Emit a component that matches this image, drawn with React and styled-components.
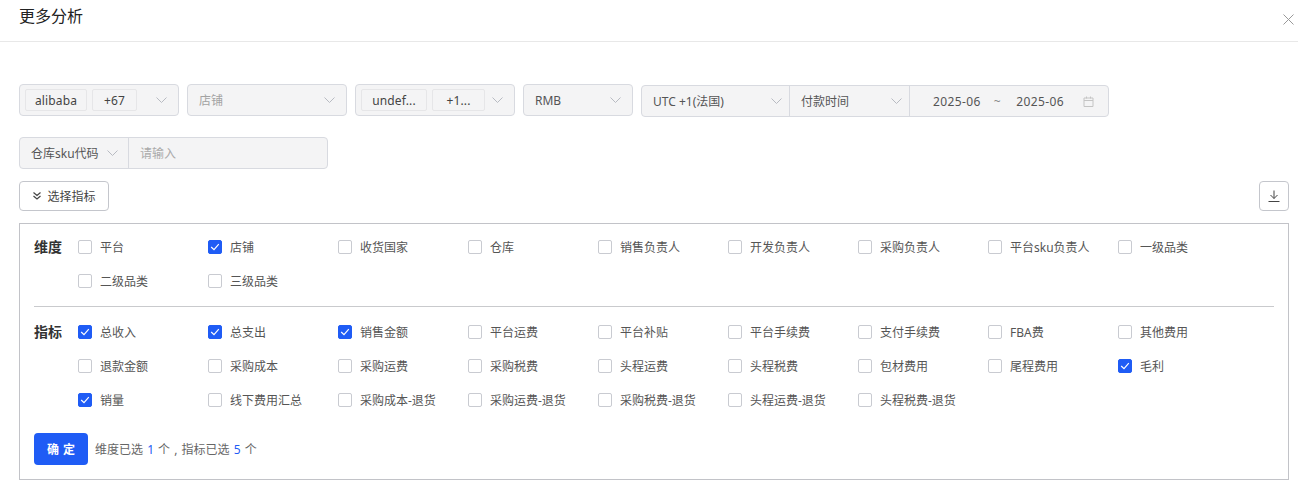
import React from "react";
import styled, { createGlobalStyle } from "styled-components";

const Global = createGlobalStyle`
  html, body { margin: 0; padding: 0; background: #fff; overflow: hidden; }
  body { font-family: "Noto Sans", "Noto Sans CJK SC", sans-serif; font-size: 12px; color: #333; }
  * { box-sizing: border-box; }
`;

const Header = styled.header`
  height: 42px; padding: 0 4px 9px 19px; border-bottom: 1px solid #e8e8e8;
  display: flex; justify-content: space-between; align-items: center;
`;
const Title = styled.h1`margin: 0; font-size: 16px; font-weight: 400; color: #222; line-height: 32px;`;
const CloseIcon = styled.svg`width: 11px; height: 11px; margin-top: 6px; stroke: #999; fill: none; stroke-width: 1;`;

const Body = styled.main`padding: 42px 9px 0 19px;`;
const FilterRow = styled.div`display: flex; gap: 8px; height: 33px; align-items: flex-start;`;
const Field = styled.div`
  width: ${p => p.$w}px; height: 32px; background: #f4f4f5; border: 1px solid #d8dae0; border-radius: 4px;
  display: flex; align-items: center; padding: 0 ${p => p.$pr ?? 11}px 0 ${p => p.$pl ?? 5}px; color: #555;
`;
const Tag = styled.span`
  width: ${p => p.$w}px; height: 22px; background: #f4f4f5; border: 1px solid #e6e6e8; border-radius: 2px;
  margin-right: 5px; display: flex; align-items: center; justify-content: center; color: #444;
  font-size: 12px; flex: none; letter-spacing: .15px;
`;
const Value = styled.span`flex: 1; padding-left: ${p => p.$pl ?? 6}px; color: ${p => (p.$muted ? "#a3a3a3" : "#555")};`;
const Chevron = styled.svg`width: 11px; height: 6px; margin-left: auto; stroke: #b8bbc2; fill: none; stroke-width: 1; flex: none;`;
const Down = () => <Chevron viewBox="0 0 11 6"><path d="M.5.5 5.500 5.500 10.500.5" /></Chevron>;

const Group = styled.div`
  margin-top: 1px; display: flex; height: 32px; width: 468px; background: #f4f4f5;
  border: 1px solid #d8dae0; border-radius: 4px; color: #555;
`;
const Segment = styled.div`
  width: ${p => p.$w}px; display: flex; align-items: center; padding: 0 ${p => p.$pr}px 0 11px;
  border-right: 1px solid #d8dae0; flex: none;
`;
const DateSeg = styled.div`
  flex: 1; display: flex; align-items: center; padding: 0 14px 0 23px; color: #555; letter-spacing: .4px;
`;
const Tilde = styled.span`margin: 0 15px 0 13px; color: #888;`;
const CalIcon = styled.svg`width: 11px; height: 11px; margin-left: auto; stroke: #c4c4c4; fill: none; stroke-width: 1;`;

const SearchRow = styled.div`
  margin-top: 20px; width: 309px; height: 32px; display: flex; background: #f4f4f5;
  border: 1px solid #d8dae0; border-radius: 4px;
`;
const SearchPick = styled.div`
  width: 109px; display: flex; align-items: center; padding: 0 10px 0 11px; border-right: 1px solid #d8dae0; color: #555;
`;
const SearchInput = styled.div`flex: 1; display: flex; align-items: center; padding-left: 11px; color: #aaa;`;

const ActionRow = styled.div`margin-top: 12px; display: flex; justify-content: space-between;`;
const OutlineBtn = styled.button`
  width: ${p => p.$w}px; height: 30px; background: #fff; border: 1px solid #c4c6cc; border-radius: 4px;
  display: flex; align-items: center; justify-content: center; gap: 5px; padding: 0;
  font: inherit; color: #444;
`;
const SmallIcon = styled.svg`width: ${p => p.$s}px; height: ${p => p.$s}px; stroke: #444; fill: none; stroke-width: ${p => p.$sw ?? 1};`;

const Panel = styled.section`
  margin-top: 12px; height: 257px; border: 1px solid #c2c3c8; padding: 6px 14px 0;
`;
const Block = styled.div`display: flex; align-items: flex-start;`;
const BlockLabel = styled.div`width: 44px; line-height: 34px; font-size: 14px; font-weight: 600; color: #333; flex: none;`;
const Grid = styled.div`flex: 1; display: grid; grid-template-columns: repeat(9, 130px); grid-auto-rows: 34px;`;
const Item = styled.label`display: flex; align-items: center; gap: 8px; color: #555; white-space: nowrap;`;
const Box = styled.span`
  width: 14px; height: 14px; border-radius: 2px; flex: none; display: flex; align-items: center; justify-content: center;
  border: 1px solid ${p => (p.$on ? "#1f5cf5" : "#c9cbd1")}; background: ${p => (p.$on ? "#1f5cf5" : "#fff")};
`;
const Tick = styled.svg`width: 10px; height: 8px; stroke: #fff; fill: none; stroke-width: 1.2;`;
const Divider = styled.hr`margin: 8px 0 8px; border: 0; border-top: 1px solid #c9cacd;`;

const Footer = styled.div`margin-top: 16px; display: flex; align-items: center; gap: 7px;`;
const Confirm = styled.button`
  width: 54px; height: 32px; border: 0; border-radius: 4px; background: #1f5cf5; color: #fff; padding: 0;
  font: inherit; font-size: 12px; font-weight: 600; word-spacing: 1px;
`;
const Summary = styled.span`color: #666; word-spacing: 1px;`;
const Num = styled.span`color: #1f5cf5;`;

const dims = ["平台", "店铺", "收货国家", "仓库", "销售负责人", "开发负责人", "采购负责人", "平台sku负责人", "一级品类", "二级品类", "三级品类"];
const metrics = ["总收入", "总支出", "销售金额", "平台运费", "平台补贴", "平台手续费", "支付手续费", "FBA费", "其他费用", "退款金额", "采购成本", "采购运费", "采购税费", "头程运费", "头程税费", "包材费用", "尾程费用", "毛利", "销量", "线下费用汇总", "采购成本-退货", "采购运费-退货", "采购税费-退货", "头程运费-退货", "头程税费-退货"];
const checked = new Set(["店铺", "总收入", "总支出", "销售金额", "毛利", "销量"]);

const Check = ({ label }) => {
  const on = checked.has(label);
  return (
    <Item>
      <Box $on={on}>{on && <Tick viewBox="0 0 10 8"><path d="M1.2 4 4 6.600 8.800 1.200" /></Tick>}</Box>
      {label}
    </Item>
  );
};

export default function App() {
  return (
    <>
      <Global />
      <Header>
        <Title>更多分析</Title>
        <CloseIcon viewBox="0 0 11 11"><path d="M.5.5l10 10M10.500.5l-10 10" /></CloseIcon>
      </Header>
      <Body>
        <FilterRow>
          <Field $w={160}><Tag $w={62}>alibaba</Tag><Tag $w={45}>+67</Tag><Down /></Field>
          <Field $w={160}><Value $muted $pl={6}>店铺</Value><Down /></Field>
          <Field $w={160}><Tag $w={66}>undef...</Tag><Tag $w={53}>+1...</Tag><Down /></Field>
          <Field $w={110}><Value $pl={6}>RMB</Value><Down /></Field>
          <Group>
            <Segment $w={148} $pr={7}>UTC +1(法国)<Down /></Segment>
            <Segment $w={120} $pr={7}>付款时间<Down /></Segment>
            <DateSeg>2025-06<Tilde>~</Tilde>2025-06
              <CalIcon viewBox="0 0 11 11"><path d="M1 2h9v8.500H1zM1 4.500h9M3.500.5v2M7.500.5v2" /></CalIcon>
            </DateSeg>
          </Group>
        </FilterRow>
        <SearchRow>
          <SearchPick>仓库sku代码<Down /></SearchPick>
          <SearchInput>请输入</SearchInput>
        </SearchRow>
        <ActionRow>
          <OutlineBtn $w={90}>
            <SmallIcon $s={10} $sw={1.2} viewBox="0 0 10 10"><path d="M1.500 1.500 5 4.500l3.500-3M1.500 5 5 8l3.500-3" /></SmallIcon>
            选择指标
          </OutlineBtn>
          <OutlineBtn $w={30}>
            <SmallIcon $s={14} viewBox="0 0 14 14"><path d="M7 1.500v8M3.500 6 7 9.500 10.500 6M1.500 12.500h11" /></SmallIcon>
          </OutlineBtn>
        </ActionRow>
        <Panel>
          <Block>
            <BlockLabel>维度</BlockLabel>
            <Grid>{dims.map(d => <Check key={d} label={d} />)}</Grid>
          </Block>
          <Divider />
          <Block>
            <BlockLabel>指标</BlockLabel>
            <Grid>{metrics.map(d => <Check key={d} label={d} />)}</Grid>
          </Block>
          <Footer>
            <Confirm>确 定</Confirm>
            <Summary>维度已选 <Num>1</Num> 个 , 指标已选 <Num>5</Num> 个</Summary>
          </Footer>
        </Panel>
      </Body>
    </>
  );
}
